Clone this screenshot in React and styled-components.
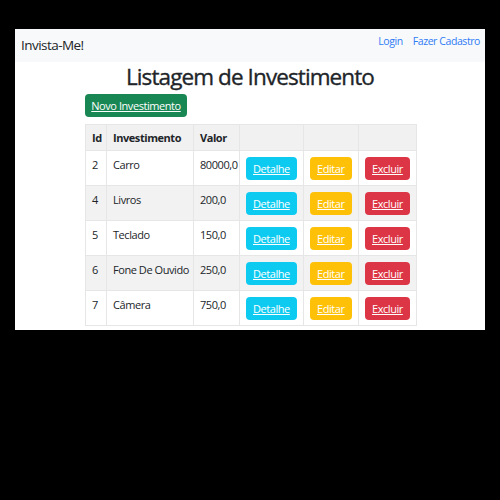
import React from "react";
import styled, { createGlobalStyle } from "styled-components";

const Global = createGlobalStyle`
  html, body { margin: 0; padding: 0; background: #000; }
  body { font-family: "Open Sans", "Noto Sans", sans-serif; color: #212529; }
  * { letter-spacing: -0.04em; }
`;

const Page = styled.div`
  width: 500px;
  height: 500px;
  background: #000;
  padding: 29px 15px 0;
  box-sizing: border-box;
`;

const Panel = styled.div`
  background: #fff;
  height: 301px;
  display: flex;
  flex-direction: column;
`;

const Navbar = styled.nav`
  height: 33px;
  background: #f8f9fa;
  display: flex;
  justify-content: space-between;
  align-items: flex-start;
  padding: 0 5px 0 6px;
`;

const Brand = styled.span`
  font-size: 13.5px;
  line-height: 33px;
  color: #212529;
`;

const NavLinks = styled.div`
  display: flex;
  gap: 10px;
  padding-top: 4px;
`;

const NavLink = styled.a`
  font-size: 10.5px;
  line-height: 16px;
  color: #2f7cf6;
  text-decoration: none;
`;

const Main = styled.main`
  padding: 0 70px;
  display: flex;
  flex-direction: column;
  align-items: flex-start;
`;

const Title = styled.h2`
  align-self: stretch;
  text-align: center;
  margin: 1px 0 4px;
  font-size: 22.5px;
  font-weight: 400;
  line-height: 27px;
  color: #212529;
  -webkit-text-stroke: 0.35px #212529;
`;

const Btn = styled.a`
  display: inline-flex;
  align-items: center;
  justify-content: center;
  height: 23px;
  padding: 0 7px;
  box-sizing: border-box;
  border-radius: 4px;
  background: ${(p) => p.$bg};
  color: #fff;
  font-size: 11px;
  text-decoration: underline;
  white-space: nowrap;
  cursor: pointer;
`;

const NewBtn = styled(Btn)`
  width: 102px;
  margin-bottom: 7px;
`;

const Table = styled.table`
  width: 331px;
  border-collapse: collapse;
  table-layout: fixed;
  font-size: 11px;
`;

const Th = styled.th`
  background: #f1f1f1;
  border: 1px solid #e6e6e6;
  padding: 4px 6px;
  line-height: 16px;
  text-align: left;
  font-weight: 700;
  height: 17px;
`;

const Tr = styled.tr`
  background: ${(p) => (p.$striped ? "#f2f2f2" : "#fff")};
`;

const Td = styled.td`
  border: 1px solid #e6e6e6;
  padding: 6px 6px 5px;
  line-height: 16px;
  vertical-align: top;
  white-space: nowrap;
  color: #212529;
`;

const rows = [
  { id: 2, nome: "Carro", valor: "80000,0" },
  { id: 4, nome: "Livros", valor: "200,0" },
  { id: 5, nome: "Teclado", valor: "150,0" },
  { id: 6, nome: "Fone De Ouvido", valor: "250,0" },
  { id: 7, nome: "Câmera", valor: "750,0" },
];

export default function App() {
  return (
    <>
      <Global />
      <Page>
        <Panel>
          <Navbar>
            <Brand>Invista-Me!</Brand>
            <NavLinks>
              <NavLink>Login</NavLink>
              <NavLink>Fazer Cadastro</NavLink>
            </NavLinks>
          </Navbar>
          <Main>
            <Title>Listagem de Investimento</Title>
            <NewBtn $bg="#198754">Novo Investimento</NewBtn>
            <Table>
              <colgroup>
                <col style={{ width: 21 }} />
                <col style={{ width: 87 }} />
                <col style={{ width: 46 }} />
                <col style={{ width: 64 }} />
                <col style={{ width: 55 }} />
                <col style={{ width: 58 }} />
              </colgroup>
              <thead>
                <tr>
                  <Th>Id</Th>
                  <Th>Investimento</Th>
                  <Th>Valor</Th>
                  <Th />
                  <Th />
                  <Th />
                </tr>
              </thead>
              <tbody>
                {rows.map((r, i) => (
                  <Tr key={r.id} $striped={i % 2 === 1}>
                    <Td>{r.id}</Td>
                    <Td>{r.nome}</Td>
                    <Td>{r.valor}</Td>
                    <Td>
                      <Btn $bg="#0dcaf0">Detalhe</Btn>
                    </Td>
                    <Td>
                      <Btn $bg="#ffc107">Editar</Btn>
                    </Td>
                    <Td>
                      <Btn $bg="#dc3545">Excluir</Btn>
                    </Td>
                  </Tr>
                ))}
              </tbody>
            </Table>
          </Main>
        </Panel>
      </Page>
    </>
  );
}
